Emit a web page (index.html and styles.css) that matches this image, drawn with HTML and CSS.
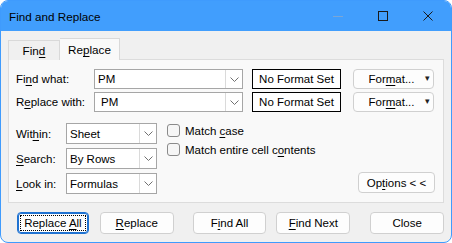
FILE: index.html
```html
<!DOCTYPE html>
<html>
<head>
<meta charset="utf-8">
<link rel="stylesheet" href="styles.css">
</head>
<body>
<div class="window">
  <div class="titlebar">
    <div class="title">Find and Replace</div>
    <div class="controls">
      <div class="ctl"><svg width="12" height="12" viewBox="0 0 12 12"><path d="M1 6.5H11" stroke="#7aa6d6" stroke-width="1"/></svg></div>
      <div class="ctl"><svg width="12" height="12" viewBox="0 0 12 12"><rect x="1.5" y="1.5" width="9" height="9" fill="none" stroke="#1a1a1a" stroke-width="1"/></svg></div>
      <div class="ctl"><svg width="12" height="12" viewBox="0 0 12 12"><path d="M1.5 1.5L10.5 10.5M10.5 1.5L1.5 10.5" stroke="#1a1a1a" stroke-width="1"/></svg></div>
    </div>
  </div>
  <div class="body">
    <div class="tabs">
      <div class="tab"><span>Fin<u>d</u></span></div>
      <div class="tab active"><span>Re<u>p</u>lace</span></div>
    </div>
    <div class="panel">
      <div class="top-grid">
        <div class="label"><span>Fi<u>n</u>d what:</span></div>
        <div class="combo wide"><span class="val">PM</span><span class="drop"><svg width="9" height="5" viewBox="0 0 9 5"><path d="M0.5 0.5L4.5 4.5L8.5 0.5" fill="none" stroke="#707070"/></svg></span></div>
        <div class="fmtbox">No Format Set</div>
        <div class="btn fmt"><span>For<u>m</u>at...</span><span class="arrow">▾</span></div>

        <div class="label"><span>R<u>e</u>place with:</span></div>
        <div class="combo wide"><span class="val v2">PM</span><span class="drop"><svg width="9" height="5" viewBox="0 0 9 5"><path d="M0.5 0.5L4.5 4.5L8.5 0.5" fill="none" stroke="#707070"/></svg></span></div>
        <div class="fmtbox">No Format Set</div>
        <div class="btn fmt"><span>For<u>m</u>at...</span><span class="arrow">▾</span></div>
      </div>
      <div class="lower">
        <div class="opts">
          <div class="label"><span>Wit<u>h</u>in:</span></div>
          <div class="combo small"><span class="val">Sheet</span><span class="drop"><svg width="9" height="5" viewBox="0 0 9 5"><path d="M0.5 0.5L4.5 4.5L8.5 0.5" fill="none" stroke="#707070"/></svg></span></div>
          <div class="label"><span><u>S</u>earch:</span></div>
          <div class="combo small"><span class="val">By Rows</span><span class="drop"><svg width="9" height="5" viewBox="0 0 9 5"><path d="M0.5 0.5L4.5 4.5L8.5 0.5" fill="none" stroke="#707070"/></svg></span></div>
          <div class="label"><span><u>L</u>ook in:</span></div>
          <div class="combo small"><span class="val">Formulas</span><span class="drop"><svg width="9" height="5" viewBox="0 0 9 5"><path d="M0.5 0.5L4.5 4.5L8.5 0.5" fill="none" stroke="#707070"/></svg></span></div>
        </div>
        <div class="checks">
          <div class="check"><span class="box"></span><span>Match <u>c</u>ase</span></div>
          <div class="check"><span class="box"></span><span>Match entire cell c<u>o</u>ntents</span></div>
        </div>
        <div class="spacer"></div>
        <div class="btn options"><span>Op<u>t</u>ions &lt; &lt;</span></div>
      </div>
    </div>
    <div class="buttons">
      <div class="btn b focus"><span class="dots"><span>Replace <u>A</u>ll</span></span></div>
      <div class="btn b b-replace"><span><u>R</u>eplace</span></div>
      <div class="btn b b-findall"><span>F<u>i</u>nd All</span></div>
      <div class="btn b b-findnext"><span><u>F</u>ind Next</span></div>
      <div class="btn b b-close"><span>Close</span></div>
    </div>
  </div>
</div>
</body>
</html>
```

FILE: styles.css
```css
* { box-sizing: border-box; }
html, body { margin: 0; padding: 0; background: #ffffff; }
body {
  width: 452px;
  height: 243px;
  font-family: "Liberation Sans", Arial, sans-serif;
  font-size: 11.5px;
  color: #000;
  overflow: hidden;
}
u { text-decoration: underline; text-underline-offset: 2px; }
.window {
  width: 452px;
  height: 243px;
  border: 1px solid #3f9bfd;
  border-radius: 8px;
  overflow: hidden;
  display: flex;
  flex-direction: column;
  background: #f0f0f0;
}
.titlebar {
  height: 30px;
  background: #419efd;
  display: flex;
  align-items: center;
  flex-shrink: 0;
}
.title {
  padding-left: 8px;
  flex: 1;
  font-size: 11.7px;
  padding-top: 1px;
}
.controls { display: flex; padding-right: 1px; }
.ctl {
  width: 45px;
  height: 30px;
  display: flex;
  align-items: center;
  justify-content: center;
}
.body {
  flex: 1;
  padding: 7px 7px 0 7px;
  display: flex;
  flex-direction: column;
}
.tabs {
  display: flex;
  align-items: flex-end;
  height: 22px;
  position: relative;
  z-index: 1;
  margin-bottom: -1px;
}
.tab {
  height: 20px;
  border: 1px solid #d9d9d9;
  border-bottom: none;
  background: #f0f0f0;
  display: flex;
  align-items: center;
  justify-content: center;
  width: 52px;
  font-size: 11.7px;
}
.tab.active {
  height: 22px;
  width: 60px;
  background: #f9f9f9;
  border-left: none;
}
.panel {
  height: 144px;
  border: 1px solid #dcdcdc;
  background: #f9f9f9;
  padding: 9px 8px 8px 7px;
  display: flex;
  flex-direction: column;
}
.top-grid {
  display: grid;
  grid-template-columns: 78px 149px 98px 93px;
  row-gap: 3px;
  grid-auto-rows: 20px;
  align-items: stretch;
}
.top-grid .fmtbox { margin-left: 9px; }
.top-grid .fmt { margin-left: 12px; }
.label { display: flex; align-items: center; }
.combo {
  border: 1px solid #a6a6a6;
  background: #fff;
  display: flex;
  align-items: stretch;
}
.combo .val { flex: 1; display: flex; align-items: center; padding-left: 3px; }
.combo .val.v2 { padding-left: 6px; }
.combo .drop {
  width: 17px;
  border-left: 1px solid #dadada;
  display: flex;
  align-items: center;
  justify-content: center;
}
.fmtbox {
  border: 1px solid #000;
  background: #fff;
  display: flex;
  align-items: center;
  justify-content: center;
}
.btn {
  border: 1px solid #d0d0d0;
  border-radius: 4px;
  background: #fdfdfd;
  display: flex;
  align-items: center;
  justify-content: center;
}
.fmt { position: relative; padding-right: 4px; }
.fmt .arrow {
  position: absolute;
  right: 3px;
  top: 3px;
  font-size: 9px;
  color: #222;
}
.lower {
  margin-top: 11px;
  display: flex;
  align-items: flex-start;
  flex: 1;
}
.opts {
  display: grid;
  grid-template-columns: 50px 91px;
  grid-auto-rows: 21px;
  row-gap: 4px;
}
.checks {
  margin-left: 10px;
  padding-top: 1px;
  display: flex;
  flex-direction: column;
  gap: 6px;
}
.check { display: flex; align-items: center; gap: 5px; height: 13px; }
.box {
  width: 13px;
  height: 13px;
  border: 1px solid #8a8a8a;
  border-radius: 3px;
  background: #f6f6f6;
}
.spacer { flex: 1; }
.options {
  align-self: flex-end;
  width: 77px;
  height: 21px;
  margin-bottom: 1px;
}
.buttons {
  display: flex;
  padding: 9px 0 0 9px;
}
.b { width: 74px; height: 22px; }
.b.focus {
  width: 72px;
  border: 1px solid #1f72d1;
  box-shadow: inset 0 0 0 1px #1f72d1;
  padding: 2px;
  align-items: stretch;
}
.b-replace { margin-left: 11px; }
.b-findall { margin-left: 19px; }
.b-findnext { margin-left: 10px; }
.b-close { margin-left: 20px; }
.dots {
  flex: 1;
  border: 1px dotted #000;
  display: flex;
  align-items: center;
  justify-content: center;
}
```
